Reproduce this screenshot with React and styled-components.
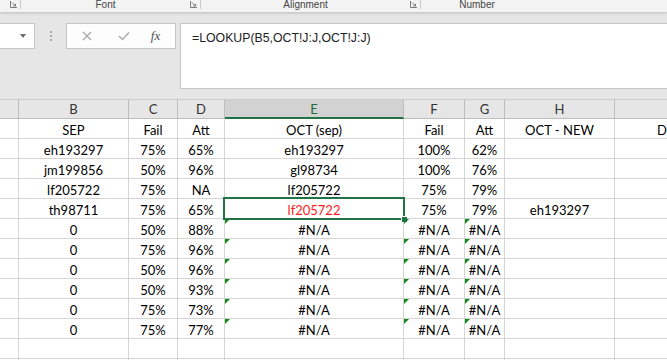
import React from 'react';
import styled, { createGlobalStyle, css } from 'styled-components';

const GlobalStyle = createGlobalStyle`
  html, body {
    margin: 0;
    padding: 0;
    overflow: hidden;
    background: #e6e6e6;
  }
`;

const cellFont = `Lato, "Open Sans", sans-serif`;
const uiFont = `"Liberation Sans", Arial, sans-serif`;

const columns = [
  { key: 'A', width: 19 },
  { key: 'B', width: 110 },
  { key: 'C', width: 49 },
  { key: 'D', width: 47 },
  { key: 'E', width: 179, selected: true },
  { key: 'F', width: 61 },
  { key: 'G', width: 40 },
  { key: 'H', width: 110 },
  { key: 'I', width: 150 },
];

// one entry per row, A..I ; "err" marks a cell with the green error flag
const rows = [
  ['', 'SEP', 'Fail', 'Att', 'OCT (sep)', 'Fail', 'Att', 'OCT - NEW', 'D'],
  ['', 'eh193297', '75%', '65%', 'eh193297', '100%', '62%', '', ''],
  ['', 'jm199856', '50%', '96%', 'gl98734', '100%', '76%', '', ''],
  ['', 'lf205722', '75%', 'NA', 'lf205722', '75%', '79%', '', ''],
  ['', 'th98711', '75%', '65%', 'lf205722', '75%', '79%', 'eh193297', ''],
  ['', '0', '50%', '88%', 'err', 'err', 'err', '', ''],
  ['', '0', '75%', '96%', 'err', 'err', 'err', '', ''],
  ['', '0', '50%', '96%', 'err', 'err', 'err', '', ''],
  ['', '0', '50%', '93%', 'err', 'err', 'err', '', ''],
  ['', '0', '75%', '73%', 'err', 'err', 'err', '', ''],
  ['', '0', '75%', '77%', 'err', 'err', 'err', '', ''],
  ['', '', '', '', '', '', '', '', ''],
  ['', '', '', '', '', '', '', '', ''],
];

const ribbonGroups = [
  { label: '', width: 21, launcher: true },
  { label: 'Font', width: 180, launcher: true },
  { label: 'Alignment', width: 220, launcher: true },
  { label: 'Number', width: 122 },
];

const Page = styled.div`
  width: 667px;
  height: 360px;
  overflow: hidden;
  background: #e6e6e6;
  display: flex;
  flex-direction: column;
`;

const Ribbon = styled.div`
  height: 12px;
  flex: none;
  display: flex;
  background: #f3f3f3;
  overflow: hidden;
  position: relative;
  z-index: 2;
  box-shadow: 0 1px 3px rgba(0, 0, 0, 0.18);
`;

const RibbonGroup = styled.div`
  width: ${(p) => p.$w}px;
  flex: none;
  display: flex;
  align-items: flex-start;
  border-right: ${(p) => (p.$edge ? '1px solid #c8c8c8' : 'none')};
  box-sizing: border-box;
  height: 9px;
  padding-right: ${(p) => (p.$edge ? 3 : 10)}px;
`;

const RibbonLabel = styled.span`
  flex: 1;
  text-align: center;
  font-family: ${uiFont};
  font-size: 10px;
  line-height: 14px;
  margin-top: -2px;
  color: #444;
`;

const Launcher = styled.svg`
  width: 7px;
  height: 7px;
  flex: none;
  margin-top: 1px;
`;

const FormulaArea = styled.div`
  height: 87px;
  flex: none;
  display: flex;
  align-items: flex-start;
  padding-top: 11px;
  box-sizing: border-box;
`;

const NameBox = styled.div`
  width: 35px;
  height: 26px;
  flex: none;
  box-sizing: border-box;
  background: #fff;
  border: 1px solid #c6c6c6;
  border-left: none;
  display: flex;
  align-items: center;
  justify-content: flex-end;
  padding-right: 8px;
`;

const DropArrow = styled.span`
  width: 0;
  height: 0;
  border-left: 3px solid transparent;
  border-right: 3px solid transparent;
  border-top: 4px solid #6a6a6a;
`;

const Grip = styled.div`
  width: 31px;
  height: 26px;
  flex: none;
  display: flex;
  flex-direction: column;
  align-items: center;
  justify-content: center;
  gap: 2px;
`;

const GripDot = styled.span`
  width: 2px;
  height: 2px;
  background: #a8a8a8;
`;

const ButtonBox = styled.div`
  width: 110px;
  height: 26px;
  flex: none;
  box-sizing: border-box;
  background: #fdfdfd;
  border: 1px solid #c6c6c6;
  display: grid;
  grid-template-columns: 37px 37px 1fr;
  align-items: center;
  justify-items: center;
  padding-left: 1px;
`;

const FxLabel = styled.span`
  font-family: "Liberation Serif", "Times New Roman", serif;
  font-style: italic;
  font-size: 13px;
  color: #505050;
  margin-left: -6px;
`;

const FormulaBox = styled.div`
  flex: 1;
  margin-left: 4px;
  height: 66px;
  box-sizing: border-box;
  background: #fff;
  border: 1px solid #c6c6c6;
  border-right: none;
  padding: 7px 0 0 11px;
  font-family: ${uiFont};
  font-size: 12.3px;
  color: #222;
  white-space: nowrap;
`;

const Sheet = styled.div`
  display: grid;
  grid-template-columns: ${columns.map((c) => `${c.width}px`).join(' ')};
  grid-auto-rows: 20px;
  background: #fff;
  width: max-content;
`;

const HeaderCell = styled.div`
  box-sizing: border-box;
  display: flex;
  align-items: center;
  justify-content: center;
  background: ${(p) => (p.$selected ? '#d2d2d2' : '#e6e6e6')};
  border-top: 1px solid #cdcdcd;
  border-right: 1px solid #bdbdbd;
  border-bottom: ${(p) => (p.$selected ? '2px solid #217346' : '1px solid #bdbdbd')};
  font-family: ${cellFont};
  font-size: 13px;
  color: ${(p) => (p.$selected ? '#1e6b3f' : '#333')};
  padding-top: ${(p) => (p.$selected ? 1 : 0)}px;
`;

const Cell = styled.div`
  position: relative;
  box-sizing: border-box;
  display: flex;
  align-items: flex-end;
  justify-content: ${(p) => (p.$left ? 'flex-start' : 'center')};
  padding-left: ${(p) => (p.$left ? 42 : 0)}px;
  border-right: 1px solid #d4d4d4;
  border-bottom: 1px solid #d4d4d4;
  font-family: ${cellFont};
  font-size: 13px;
  line-height: 15px;
  color: ${(p) => (p.$red ? '#ff1a1a' : '#000')};
  white-space: nowrap;
  ${(p) =>
    p.$flag &&
    css`
      &::before {
        content: '';
        position: absolute;
        top: 0;
        left: 0;
        border-top: 5px solid #12891a;
        border-right: 5px solid transparent;
      }
    `}
`;

const Selection = styled.div`
  position: absolute;
  top: -2px;
  left: -2px;
  right: -2px;
  bottom: -2px;
  border: 2px solid #217346;
  z-index: 3;
  pointer-events: none;
`;

const FillHandle = styled.div`
  position: absolute;
  right: -4px;
  bottom: -4px;
  width: 5px;
  height: 5px;
  background: #217346;
  border: 1px solid #fff;
  border-right: none;
  border-bottom: none;
`;

const LauncherIcon = () => (
  <Launcher viewBox="0 0 7 7">
    <path d="M0.5 0 V6.5 H7" fill="none" stroke="#7a7a7a" strokeWidth="1" />
    <path d="M2 1.5 L5.5 5 M5.5 2.8 V5 H3.3" fill="none" stroke="#7a7a7a" strokeWidth="1" />
  </Launcher>
);

const CrossIcon = () => (
  <svg width="10" height="10" viewBox="0 0 10 10">
    <path d="M1 1 L9 9 M9 1 L1 9" stroke="#a9a9a9" strokeWidth="1.3" fill="none" />
  </svg>
);

const CheckIcon = () => (
  <svg width="12" height="10" viewBox="0 0 12 10">
    <path d="M1 5 L4.5 8.5 L11 1.5" stroke="#a9a9a9" strokeWidth="1.4" fill="none" />
  </svg>
);

export default function App() {
  return (
    <Page>
      <GlobalStyle />
      <Ribbon>
        {ribbonGroups.map((g, i) => (
          <RibbonGroup key={i} $w={g.width} $edge={g.launcher}>
            <RibbonLabel>{g.label}</RibbonLabel>
            {g.launcher && <LauncherIcon />}
          </RibbonGroup>
        ))}
      </Ribbon>

      <FormulaArea>
        <NameBox>
          <DropArrow />
        </NameBox>
        <Grip>
          <GripDot />
          <GripDot />
          <GripDot />
        </Grip>
        <ButtonBox>
          <CrossIcon />
          <CheckIcon />
          <FxLabel>fx</FxLabel>
        </ButtonBox>
        <FormulaBox>=LOOKUP(B5,OCT!J:J,OCT!J:J)</FormulaBox>
      </FormulaArea>

      <Sheet>
        {columns.map((c) => (
          <HeaderCell key={c.key} $selected={c.selected}>
            {c.key === 'A' ? '' : c.key}
          </HeaderCell>
        ))}
        {rows.map((row, r) =>
          row.map((value, c) => {
            const isErr = value === 'err';
            const isActive = r === 4 && c === 4;
            return (
              <Cell
                key={`${r}-${c}`}
                $flag={isErr}
                $red={isActive}
                $left={c === 8}
              >
                {isErr ? '#N/A' : value}
                {isActive && (
                  <Selection>
                    <FillHandle />
                  </Selection>
                )}
              </Cell>
            );
          })
        )}
      </Sheet>
    </Page>
  );
}
